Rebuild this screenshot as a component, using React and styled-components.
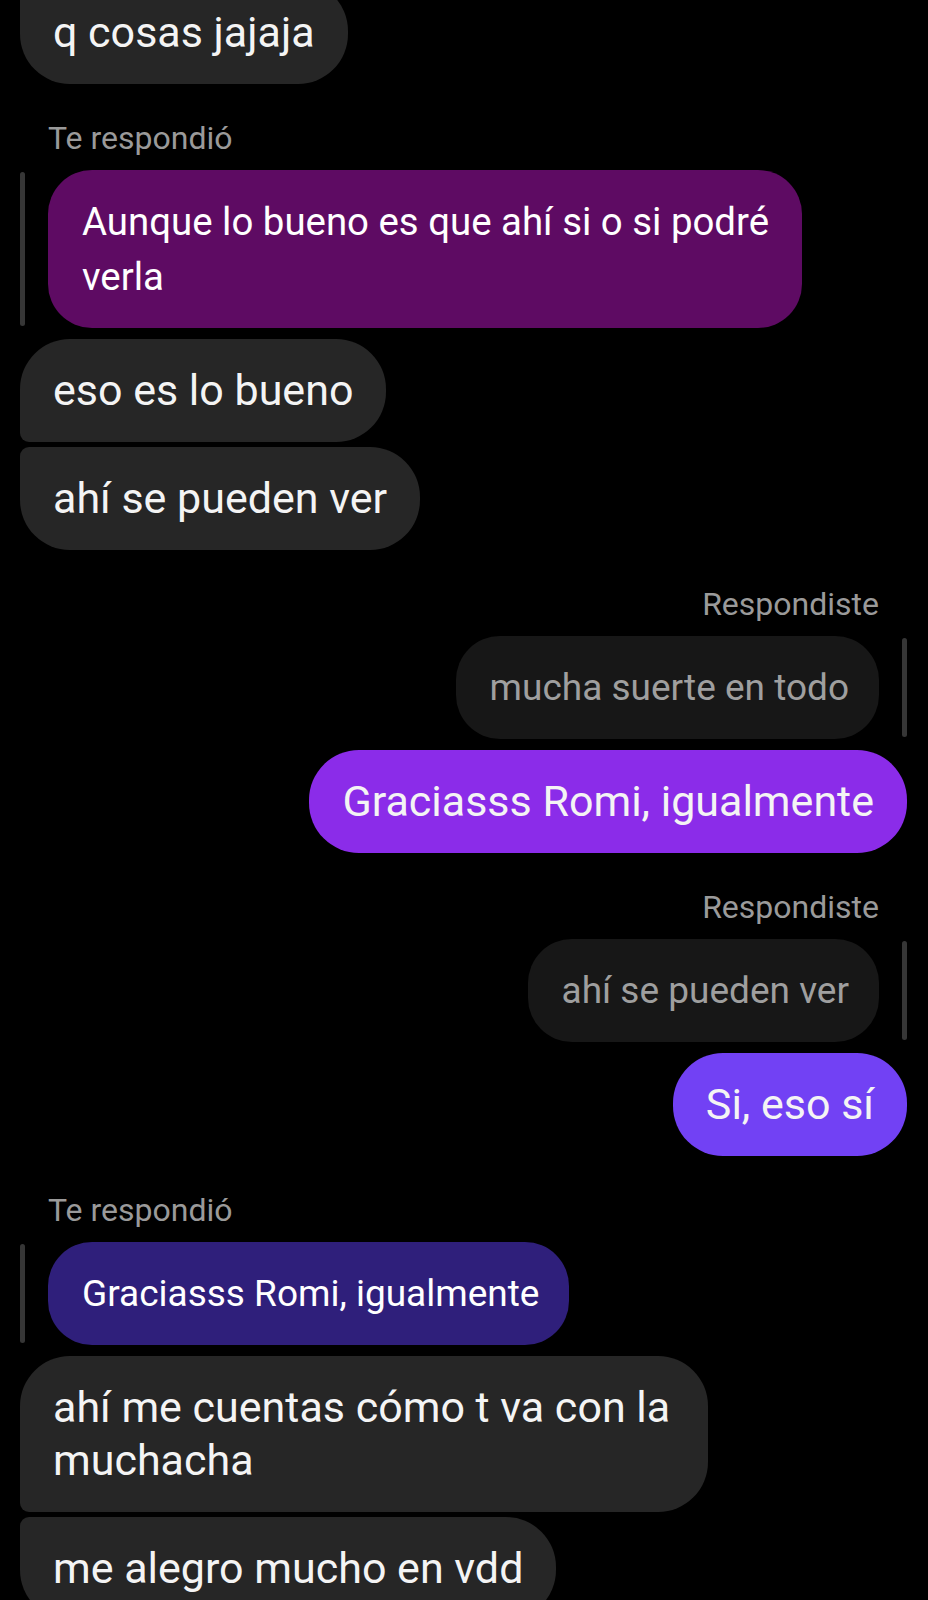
import React from "react";
import styled, { createGlobalStyle, css } from "styled-components";

const GlobalStyle = createGlobalStyle`
  html, body {
    margin: 0;
    padding: 0;
    background: #000;
  }
  body {
    font-family: Roboto, "Noto Sans", "Liberation Sans", sans-serif;
    -webkit-font-smoothing: antialiased;
  }
`;

const Thread = styled.div`
  display: flex;
  flex-direction: column;
  gap: 36px;
  padding: 0 21px 0 20px;
  height: 1600px;
  overflow: hidden;
  background: #000;
`;

const Group = styled.div`
  display: flex;
  flex-direction: column;
  align-items: ${(p) => (p.side === "right" ? "flex-end" : "flex-start")};
  margin-top: ${(p) => (p.cut ? "-19px" : "0")};
`;

const ReplyLabel = styled.div`
  font-size: 32px;
  line-height: 36px;
  color: #9a9a9a;
  margin-bottom: 14px;
  padding: ${(p) => (p.side === "right" ? "0 28px 0 0" : "0 0 0 28px")};
`;

const QuoteRow = styled.div`
  display: flex;
  flex-direction: ${(p) => (p.side === "right" ? "row-reverse" : "row")};
  align-items: stretch;
  gap: 23px;
  margin-bottom: 11px;
`;

const QuoteBar = styled.div`
  width: 5px;
  margin: 2px 0;
  border-radius: 3px;
  background: #363636;
`;

const quoteTones = {
  plum: css`
    background: #5e0b63;
    color: #fff;
  `,
  navy: css`
    background: #2f1f7b;
    color: #fff;
  `,
  muted: css`
    background: #171717;
    color: #9f9f9f;
  `,
};

const Quote = styled.div`
  box-sizing: border-box;
  max-width: 754px;
  padding: 24px 30px 24px 34px;
  border-radius: 44px;
  font-size: ${(p) => p.size || 37}px;
  line-height: 55px;
  ${(p) => quoteTones[p.tone]}
`;

const Stack = styled.div`
  display: flex;
  flex-direction: column;
  align-items: ${(p) => (p.side === "right" ? "flex-end" : "flex-start")};
  gap: 5px;
`;

const bubbleTones = {
  grey: "#262626",
  violet: "#8b2ce9",
  indigo: "#7241f4",
};

const cornerRadius = (side, pos) => {
  const big = "50px";
  const small = "9px";
  const top = pos === "first" || pos === "only" ? big : small;
  const bottom = pos === "last" || pos === "only" ? big : small;
  if (side === "right") return `${big} ${top} ${bottom} ${big}`;
  return `${top} ${big} ${big} ${bottom}`;
};

const Bubble = styled.div`
  box-sizing: border-box;
  max-width: 688px;
  padding: 25px 33px;
  font-size: 43px;
  line-height: 53px;
  color: #f4f4f4;
  background: ${(p) => bubbleTones[p.tone]};
  border-radius: ${(p) => cornerRadius(p.side, p.pos)};
`;

const groups = [
  { side: "left", cut: true, tone: "grey", messages: ["q cosas jajaja"] },
  {
    side: "left",
    label: "Te respondió",
    quote: { text: "Aunque lo bueno es que ahí si o si podré verla", tone: "plum", size: 38.4 },
    tone: "grey",
    messages: ["eso es lo bueno", "ahí se pueden ver"],
  },
  {
    side: "right",
    label: "Respondiste",
    quote: { text: "mucha suerte en todo", tone: "muted" },
    tone: "violet",
    messages: ["Graciasss Romi, igualmente"],
  },
  {
    side: "right",
    label: "Respondiste",
    quote: { text: "ahí se pueden ver", tone: "muted" },
    tone: "indigo",
    messages: ["Si, eso sí"],
  },
  {
    side: "left",
    label: "Te respondió",
    quote: { text: "Graciasss Romi, igualmente", tone: "navy" },
    tone: "grey",
    messages: ["ahí me cuentas cómo t va con la muchacha", "me alegro mucho en vdd"],
  },
];

const position = (i, n) => {
  if (n === 1) return "only";
  if (i === 0) return "first";
  if (i === n - 1) return "last";
  return "middle";
};

const App = () => {
  return (
    <>
      <GlobalStyle />
      <Thread>
        {groups.map((g, gi) => (
          <Group key={gi} side={g.side} cut={g.cut}>
            {g.label && <ReplyLabel side={g.side}>{g.label}</ReplyLabel>}
            {g.quote && (
              <QuoteRow side={g.side}>
                <QuoteBar />
                <Quote tone={g.quote.tone} size={g.quote.size}>
                  {g.quote.text}
                </Quote>
              </QuoteRow>
            )}
            <Stack side={g.side}>
              {g.messages.map((m, i) => (
                <Bubble
                  key={i}
                  side={g.side}
                  tone={g.tone}
                  pos={g.cut ? "last" : position(i, g.messages.length)}
                >
                  {m}
                </Bubble>
              ))}
            </Stack>
          </Group>
        ))}
      </Thread>
    </>
  );
};

export default App;
